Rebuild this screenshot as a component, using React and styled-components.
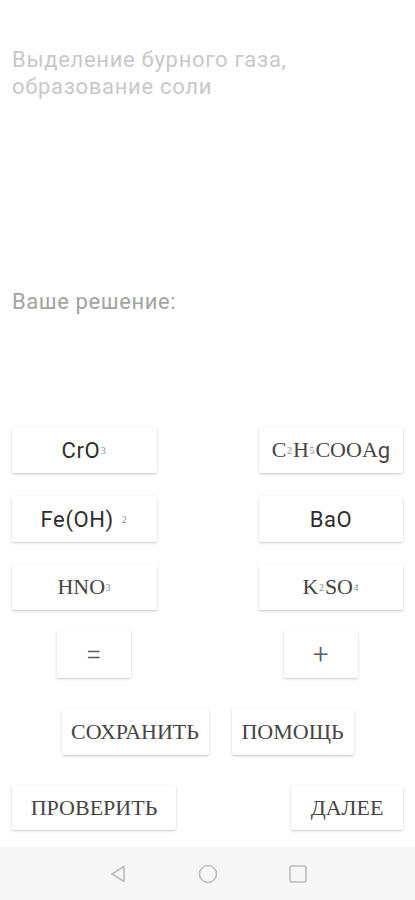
import styled, { createGlobalStyle } from "styled-components";

const GlobalStyle = createGlobalStyle`
  html, body {
    margin: 0;
    padding: 0;
    background: #ffffff;
  }
  * {
    box-sizing: border-box;
  }
`;

const SANS = `Roboto, "Noto Sans", sans-serif`;
const SERIF = `"Liberation Serif", "DejaVu Serif", serif`;

const Screen = styled.div`
  width: 415px;
  min-height: 900px;
  display: flex;
  flex-direction: column;
  background: #ffffff;
  font-family: ${SANS};
`;

const Content = styled.main`
  flex: 1;
  display: flex;
  flex-direction: column;
  padding-top: 46px;
`;

const Description = styled.p`
  margin: 0;
  padding: 0 12px;
  font-size: 22px;
  line-height: 27px;
  letter-spacing: 0.7px;
  color: #c9c9c9;
`;

const AnswerLabel = styled.p`
  margin: 188px 0 0;
  padding: 0 12px;
  font-size: 22px;
  line-height: 27px;
  letter-spacing: 0.6px;
  color: #a3a3a3;
`;

const Row = styled.div`
  display: flex;
  justify-content: ${(p) => p.$justify || "space-between"};
  gap: ${(p) => p.$gap || 0}px;
  padding: 0 ${(p) => p.$side ?? 12}px;
  margin-top: ${(p) => p.$top}px;
`;

const Key = styled.button`
  width: ${(p) => p.$w}px;
  height: ${(p) => p.$h || 46}px;
  border: none;
  border-radius: 2px;
  background: #ffffff;
  box-shadow: 0 1px 3px rgba(0, 0, 0, 0.18), 0 1px 1px rgba(0, 0, 0, 0.06);
  display: flex;
  align-items: center;
  justify-content: center;
  padding: 0;
  font-family: ${(p) => (p.$serif ? SERIF : SANS)};
  font-size: 22px;
  color: ${(p) => (p.$serif ? "#454545" : "#2e2e2e")};
  letter-spacing: ${(p) => (p.$serif ? "0" : "0.6px")};
  cursor: pointer;
`;

const Sans = styled.span`
  font-family: ${SANS};
`;

const Sub = styled.sub`
  font-family: ${SERIF};
  font-size: 10px;
  vertical-align: -2px;
  color: #8a8a8a;
  margin: 0 1px 0 ${(p) => p.$gap ?? 0.5}px;
`;

const Symbol = styled.span`
  font-family: ${SANS};
  font-size: 28px;
  font-weight: 300;
  color: #5a5a5a;
`;

const NavBar = styled.nav`
  height: 53px;
  background: #f7f7f7;
  display: flex;
  align-items: center;
  justify-content: center;
  gap: 70px;
  margin-top: 15px;
`;

const NavIcon = styled.svg`
  width: 20px;
  height: 20px;
  stroke: #bcbcbc;
  stroke-width: 1.6;
  fill: none;
`;

const App = () => (
  <>
    <GlobalStyle />
    <Screen>
      <Content>
        <Description>
          Выделение бурного газа,
          <br />
          образование соли
        </Description>
        <AnswerLabel>Ваше решение:</AnswerLabel>

        <Row $top={112}>
          <Key $w={145}>
            CrO<Sub>3</Sub>
          </Key>
          <Key $w={144} $serif>
            C<Sub>2</Sub>H<Sub>5</Sub>COOA<Sans>g</Sans>
          </Key>
        </Row>
        <Row $top={23}>
          <Key $w={145}>
            Fe(OH)<Sub $gap={8}>2</Sub>
          </Key>
          <Key $w={144}>BaO</Key>
        </Row>
        <Row $top={22}>
          <Key $w={145} $serif>
            HNO<Sub>3</Sub>
          </Key>
          <Key $w={144} $serif>
            K<Sub>2</Sub>SO<Sub>4</Sub>
          </Key>
        </Row>
        <Row $top={20} $side={57}>
          <Key $w={74} $h={48}>
            <Symbol>=</Symbol>
          </Key>
          <Key $w={74} $h={48}>
            <Symbol>+</Symbol>
          </Key>
        </Row>
        <Row $top={30} $justify="center" $gap={23} $side={0}>
          <Key $w={147} $h={47} $serif>
            СОХРАНИТЬ
          </Key>
          <Key $w={122} $h={47} $serif>
            ПОМОЩЬ
          </Key>
        </Row>
        <Row $top={30}>
          <Key $w={164} $h={45} $serif>
            ПРОВЕРИТЬ
          </Key>
          <Key $w={112} $h={45} $serif>
            ДАЛЕЕ
          </Key>
        </Row>
      </Content>

      <NavBar>
        <NavIcon viewBox="0 0 20 20">
          <path d="M16 2.5 L4 10 L16 17.5 Z" strokeLinejoin="round" />
        </NavIcon>
        <NavIcon viewBox="0 0 20 20">
          <circle cx="10" cy="10" r="8.5" />
        </NavIcon>
        <NavIcon viewBox="0 0 20 20">
          <rect x="2" y="2" width="16" height="16" rx="1.5" />
        </NavIcon>
      </NavBar>
    </Screen>
  </>
);

export default App;
